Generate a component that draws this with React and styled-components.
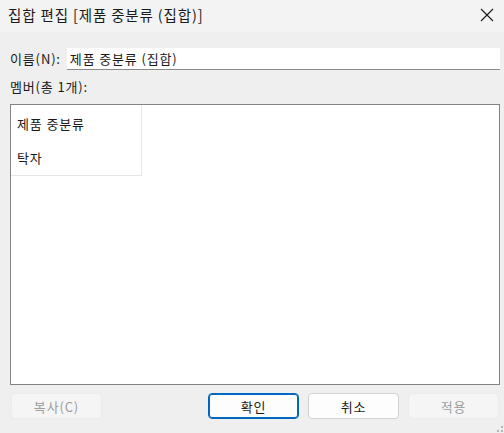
import React from "react";
import styled, { createGlobalStyle } from "styled-components";

const members = ["제품 중분류", "탁자"];

const App = () => {
  return (
    <>
      <GlobalStyle />
      <Window>
        <TitleBar>
          <Title>집합 편집 [제품 중분류 (집합)]</Title>
          <CloseButton aria-label="close">
            <svg width="14" height="14" viewBox="0 0 14 14">
              <path d="M1 1 L13 13 M13 1 L1 13" stroke="#1a1a1a" strokeWidth="1.1" />
            </svg>
          </CloseButton>
        </TitleBar>
        <Body>
          <NameRow>
            <Label>
              이름(<u>N</u>):
            </Label>
            <NameInput defaultValue="제품 중분류 (집합)" />
          </NameRow>
          <Label>멤버(총 1개):</Label>
          <ListBox>
            <Column>
              {members.map((m) => (
                <Item key={m}>{m}</Item>
              ))}
            </Column>
          </ListBox>
          <ButtonRow>
            <Button disabled>복사(C)</Button>
            <Spacer />
            <Button $primary>확인</Button>
            <Button>취소</Button>
            <Button disabled>적용</Button>
          </ButtonRow>
        </Body>
        <Grip>
          <svg width="6" height="6" viewBox="0 0 6 6">
            <rect x="4" y="0" width="2" height="2" fill="#b5b5b5" />
            <rect x="4" y="4" width="2" height="2" fill="#b5b5b5" />
            <rect x="0" y="4" width="2" height="2" fill="#b5b5b5" />
          </svg>
        </Grip>
      </Window>
    </>
  );
};
export default App;

const GlobalStyle = createGlobalStyle`
  html, body {
    margin: 0;
    padding: 0;
    background: #efefef;
  }
  body {
    font-family: "Noto Sans CJK KR", "Noto Sans", sans-serif;
    font-size: 13px;
    color: #1a1a1a;
  }
`;

const Window = styled.div`
  position: relative;
  width: 504px;
  height: 433px;
  background: #efefef;
  display: flex;
  flex-direction: column;
  overflow: hidden;
`;

const TitleBar = styled.div`
  height: 32px;
  background: #f3f3f3;
  display: flex;
  align-items: center;
  justify-content: space-between;
  padding: 0 10px 0 8px;
`;

const Title = styled.div`
  font-size: 14.5px;
  letter-spacing: 0.85px;
  color: #1b1b1b;
  margin-top: -3px;
`;

const CloseButton = styled.div`
  display: flex;
  align-items: center;
  margin-top: -2px;
`;

const Body = styled.div`
  flex: 1;
  display: flex;
  flex-direction: column;
  padding: 16px 4px 0 10px;
`;

const NameRow = styled.div`
  display: flex;
  align-items: center;
  gap: 6px;
  margin-bottom: 6px;
`;

const Label = styled.div`
  font-size: 13px;
  line-height: 22px;
  letter-spacing: 0.85px;
  u {
    text-decoration: none;
    color: #1a1a1a;
  }
`;

const NameInput = styled.input`
  flex: 1;
  min-width: 0;
  height: 22px;
  box-sizing: border-box;
  border: none;
  border-bottom: 1px solid #8a8a8a;
  background: #fff;
  font-family: "Noto Sans CJK KR", "Noto Sans", sans-serif;
  font-size: 13px;
  letter-spacing: 0.85px;
  color: #1a1a1a;
  padding: 0 3px;
  outline: none;
`;

const ListBox = styled.div`
  margin-top: 6px;
  height: 281px;
  box-sizing: border-box;
  border: 1px solid #838383;
  background: #fff;
  display: flex;
  align-items: flex-start;
`;

const Column = styled.div`
  width: 131px;
  height: 71px;
  border-right: 1px solid #e6e6e6;
  border-bottom: 1px solid #e6e6e6;
  box-sizing: border-box;
  display: flex;
  flex-direction: column;
  padding: 9px 0 0 6px;
  gap: 14px;
`;

const Item = styled.div`
  font-size: 13px;
  line-height: 20px;
  letter-spacing: 0.85px;
`;

const ButtonRow = styled.div`
  display: flex;
  gap: 9px;
  margin-top: 8px;
  padding-left: 1px;
  padding-right: 1px;
`;

const Spacer = styled.div`
  flex: 1;
`;

const Button = styled.button`
  width: 91px;
  height: 26px;
  box-sizing: border-box;
  border-radius: 4px;
  font-family: "Noto Sans CJK KR", "Noto Sans", sans-serif;
  font-size: 13px;
  letter-spacing: 0.85px;
  background: ${(p) => (p.disabled ? "#f5f5f5" : "#fdfdfd")};
  color: ${(p) => (p.disabled ? "#9d9d9d" : "#1a1a1a")};
  border: 1px solid
    ${(p) => (p.$primary ? "#0067c0" : p.disabled ? "#ebebeb" : "#d0d0d0")};
  box-shadow: ${(p) => (p.$primary ? "inset 0 0 0 1px #0067c0" : "none")};
  padding: 0;
`;

const Grip = styled.div`
  position: absolute;
  right: 1px;
  bottom: 1px;
  line-height: 0;
`;
